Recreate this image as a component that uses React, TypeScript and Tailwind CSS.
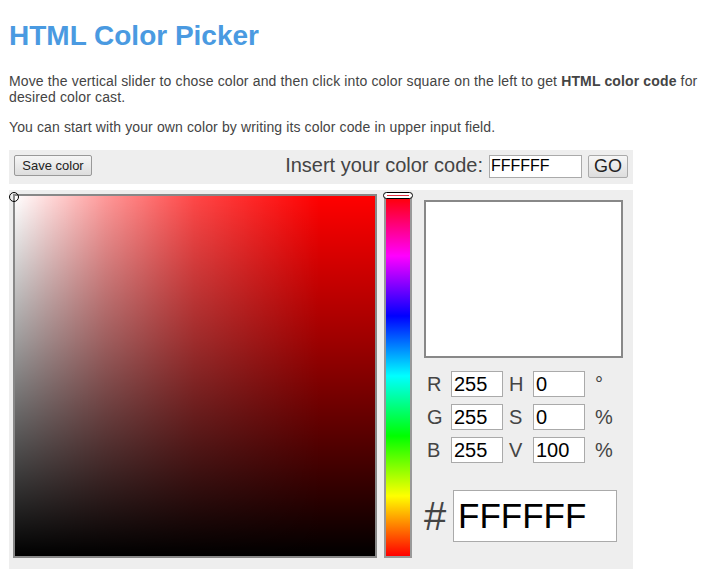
import { useState } from 'react'

const font = { fontFamily: '"Liberation Sans", Arial, sans-serif' }

function ValueRow({ label, value, label2, value2, unit }: { label: string; value: string; label2: string; value2: string; unit: string }) {
  return (
    <div className="flex items-center h-[26px]">
      <span className="w-[27px] pl-[3px] text-[20px] text-[#444]">{label}</span>
      <input
        readOnly
        value={value}
        className="w-[52px] h-[26px] border border-[#aaa] bg-white px-[2px] text-[20px] text-black outline-none"
      />
      <span className="w-[30px] pl-[6px] text-[20px] text-[#444]">{label2}</span>
      <input
        readOnly
        value={value2}
        className="w-[52px] h-[26px] border border-[#aaa] bg-white px-[2px] text-[20px] text-black outline-none"
      />
      <span className="pl-[10px] text-[20px] text-[#444]">{unit}</span>
    </div>
  )
}

export default function App() {
  const [code, setCode] = useState('FFFFFF')

  return (
    <div className="bg-white min-h-[584px] px-[9px] pt-[20px]" style={font}>
      <h1 className="text-[28px] leading-[32px] font-bold text-[#4a9ae1]">HTML Color Picker</h1>

      <p className="mt-[21px] text-[14px] leading-[16px] tracking-[0.14px] text-[#444]">
        Move the vertical slider to chose color and then click into color square on the left to get{' '}
        <b>HTML color code</b> for desired color cast.
      </p>
      <p className="mt-[14px] text-[14px] leading-[16px] tracking-[0.12px] text-[#444]">
        You can start with your own color by writing its color code in upper input field.
      </p>

      {/* horni lista */}
      <div className="mt-[15px] w-[624px] h-[34px] bg-[#eeeeee] flex items-center px-[5px]">
        <button className="w-[78px] h-[21px] -mt-[4px] border border-[#999] rounded-[2px] bg-gradient-to-b from-[#f6f6f6] to-[#dddddd] text-[13px] leading-none text-[#222]">
          Save color
        </button>
        <div className="ml-auto flex items-center -mt-[2px]">
          <span className="text-[20px] leading-none -mt-[3px] text-[#444]">Insert your color code:</span>
          <input
            value={code}
            onChange={(e) => setCode(e.target.value)}
            className="ml-[6px] w-[93px] h-[23px] border border-[#aaa] bg-white px-[1px] text-[16px] text-black outline-none"
          />
          <button className="ml-[6px] w-[40px] h-[23px] border border-[#aaa] rounded-[2px] bg-gradient-to-b from-[#f6f6f6] to-[#dddddd] text-[18px] leading-none text-[#222]">
            GO
          </button>
        </div>
      </div>

      {/* picker */}
      <div className="mt-[6px] w-[624px] h-[379px] bg-[#eeeeee] flex pt-[4px] pl-[4px]">
        <div className="relative w-[364px] h-[364px] border-2 border-[#888]">
          <div className="absolute inset-0 bg-[#ff0000]" />
          <div className="absolute inset-0 bg-[linear-gradient(to_right,#ffffff,rgba(255,255,255,0.6)_25%,rgba(255,255,255,0.28)_50%,rgba(255,255,255,0)_85%)]" />
          <div className="absolute inset-0 bg-[linear-gradient(to_bottom,rgba(0,0,0,0),rgba(0,0,0,0.38)_40%,rgba(0,0,0,1))]" />
          <div className="absolute -left-[6px] -top-[4px] w-[10px] h-[10px] rounded-full border border-black" />
        </div>

        <div className="relative ml-[7px] w-[28px] h-[364px] border-2 border-[#999]">
          <div className="absolute inset-0 bg-[linear-gradient(to_bottom,#ff0000,#ff00ff,#0000ff,#00ffff,#00ff00,#ffff00,#ff0000)]" />
          <div className="absolute -left-[3px] -right-[3px] -top-[4px] h-[7px] rounded-full border border-black bg-white flex items-center px-[3px]">
            <div className="h-[1px] w-full bg-[#e03040]" />
          </div>
        </div>

        <div className="ml-[12px] pt-[6px] flex flex-col">
          <div className="w-[199px] h-[158px] border-2 border-[#888] bg-white" />

          <div className="mt-[13px] flex flex-col gap-[7px]">
            <ValueRow label="R" value="255" label2="H" value2="0" unit="°" />
            <ValueRow label="G" value="255" label2="S" value2="0" unit="%" />
            <ValueRow label="B" value="255" label2="V" value2="100" unit="%" />
          </div>

          <div className="mt-[27px] flex items-center">
            <span className="w-[29px] text-[40px] leading-none text-[#444]">#</span>
            <input
              readOnly
              value={code}
              className="w-[164px] h-[52px] border border-[#aaa] bg-white px-[4px] text-[35px] text-black outline-none"
            />
          </div>
        </div>
      </div>
    </div>
  )
}
